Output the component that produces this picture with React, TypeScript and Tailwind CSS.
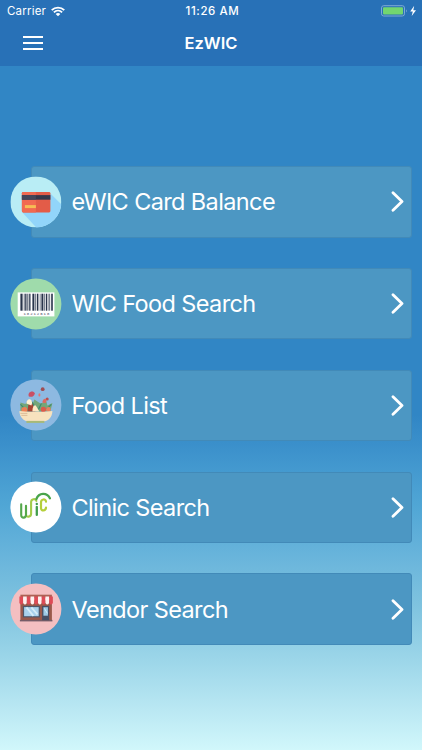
import React from "react";

function CardIcon() {
  return (
    <svg viewBox="-0.4 -0.4 52 52" className="size-full">
      <defs>
        <clipPath id="cardCircle"><circle cx="25.5" cy="25.5" r="25.5" /></clipPath>
      </defs>
      <g clipPath="url(#cardCircle)">
        <rect width="51" height="51" fill="#b9edf5" />
        <path d="M40 17 L60 37 V60 H34 L12 36Z" fill="#92d5fa" />
      </g>
      <rect x="11.5" y="15.5" width="28.5" height="20.5" rx="1.3" fill="#e35c48" />
      <path d="M12.8 15.5H25.5V36H12.8Q11.5 36 11.5 34.7V16.8Q11.5 15.5 12.8 15.5" fill="#f16a51" />
      <rect x="11.5" y="18.7" width="28.5" height="4.6" fill="#35374b" />
      <rect x="11.5" y="18.7" width="14" height="4.6" fill="#45465a" />
      <rect x="14.5" y="28.7" width="11" height="3" fill="#f6bd55" />
    </svg>
  );
}

const bars = [
  [10, 2.2], [13.4, 0.7], [14.8, 1.3], [17, 0.6], [18.3, 1.1], [20.1, 0.5], [22, 2],
  [25, 0.7], [26.5, 1.5], [29.4, 0.6], [31, 2], [34, 0.8], [35.6, 1.2], [37.5, 0.5], [39, 0.7], [40.8, 1.6],
];

function BarcodeIcon() {
  return (
    <svg viewBox="-0.4 -0.4 52 52" className="size-full">
      <circle cx="25.5" cy="25.5" r="25.5" fill="#9fdbab" />
      <rect x="7.3" y="14" width="36.7" height="24" fill="#fff" />
      {bars.map(([x, w]) => (
        <rect key={x} x={x} y="15.3" width={w} height="17" fill="#29354b" />
      ))}
      <text x="13" y="36.5" fontSize="4" textLength="26" fill="#35415a" fontFamily="Liberation Mono, monospace">18212618</text>
    </svg>
  );
}

function FoodIcon() {
  return (
    <svg viewBox="-0.4 -0.4 52 52" className="size-full">
      <circle cx="25.5" cy="25.5" r="25.5" fill="#8db9e1" />
      <path d="M10 32 L10 23 L15 24.5 L18 20 L22 25 L24 20 L30 24 L36 22 L37 26 L42 23.5 L40 32Z" fill="#75a679" />
      <path d="M10 25l5 5M41 25l-5 5M21 22l4 6M31 24l-3 6" stroke="#3d8b70" strokeWidth="1.2" />
      <circle cx="14" cy="30.5" r="3" fill="#ed8056" />
      <circle cx="38" cy="30" r="2.3" fill="#e88060" />
      <circle cx="33" cy="30" r="2.6" fill="#db5b4c" />
      <path d="M17 32l1-7 4-1 3 8Z" fill="#a64332" />
      <path d="M16 24c0-3 2-5 4-4 2 1 2 4 1 6Z" fill="#fff1d4" />
      <path d="M22 32c0-4 2-8 4-5l3 5Z" fill="#ffe9c6" />
      <path d="M9 31.5Q25 33.5 42 31.5C42 38 37 42 33 42H19C13 42 9 37 9 31.5Z" fill="#f7e2be" />
      <path d="M10 34h7M11 36h6" stroke="#d8b894" strokeWidth=".9" />
      <path d="M16 41.5h18v2H16z" fill="#a7b978" />
      <path d="M18.5 17c-2-4 4-7 6-3-1 3-3 4-6 3Z" fill="#c94f65" />
      <circle cx="32.3" cy="9.8" r="1.9" fill="#a14c51" />
      <circle cx="36.8" cy="19.5" r="1.5" fill="#b74e50" />
      <ellipse cx="29" cy="15.5" rx="1" ry="1.6" fill="#e57370" />
      <path d="M32 23c0-4 4-5 4-2s-1 3-4 2Z" fill="#dc6b61" />
    </svg>
  );
}

function WicIcon() {
  return (
    <svg viewBox="-0.4 -0.4 52 52" className="size-full" fill="none" strokeLinecap="round">
      <circle cx="25.5" cy="25.5" r="25.5" fill="#fff" />
      <path d="M15.6 25V32.8C15.6 36.7 20.7 35.7 20.7 32V20.7C20.7 17.5 25.2 16.5 26 19.5" stroke="#a3cc49" strokeWidth="2.1" />
      <path d="M10.8 22.8V33.5C10.8 37.5 15.6 37 15.6 33V24.5" stroke="#55a84b" strokeWidth="2.1" />
      <path d="M26.4 25.5v8" stroke="#419d4c" strokeWidth="2.3" />
      <circle cx="26.4" cy="22.5" r="1.2" fill="#419d4c" />
      <path d="M26 17.6C28.5 11 36.5 11 39.5 16.8" stroke="#49a44b" strokeWidth="2.3" />
      <path d="M35.6 20.2C35.3 17 30.6 17.5 30.6 21V26.5C30.6 30 35.3 29.8 35.6 26.2" stroke="#b5cf3b" strokeWidth="2.2" />
    </svg>
  );
}

function StoreIcon() {
  return (
    <svg viewBox="-0.4 -0.4 52 52" className="size-full">
      <circle cx="25.5" cy="25.5" r="25.5" fill="#f4bfc1" />
      <rect x="10" y="17" width="31.5" height="20.5" fill="#99594b" />
      <rect x="9.5" y="36.5" width="32.5" height="1.5" fill="#765c67" />
      <rect x="12.5" y="22.5" width="17" height="11.5" fill="#4e586b" />
      <rect x="13.7" y="23.7" width="14.6" height="9.1" fill="#a9d2ed" />
      <path d="M16 24l7 8.5M21 24l6 7" stroke="#d5ecf8" strokeWidth="1.7" />
      <rect x="31.7" y="22.5" width="7" height="14.3" fill="#465066" />
      <rect x="33" y="23.8" width="4.5" height="8.5" fill="#9dcbe6" />
      <path d="M34 25l3 5" stroke="#d5ecf8" strokeWidth="1" />
      <rect x="10" y="11.3" width="31.5" height="3" fill="#ad6154" />
      {[0, 1, 2, 3, 4, 5, 6, 7, 8].map((i) => (
        <path
          key={i}
          transform={`translate(${8.9 + i * 3.72} 0)`}
          d="M.1 13.2h3.7v6.300q-1.850 3.400-3.700 0Z"
          fill={i % 2 ? "#fff0ef" : "#dd4b56"}
        />
      ))}
    </svg>
  );
}

const items = [
  { label: "eWIC Card Balance", Icon: CardIcon },
  { label: "WIC Food Search", Icon: BarcodeIcon },
  { label: "Food List", Icon: FoodIcon },
  { label: "Clinic Search", Icon: WicIcon },
  { label: "Vendor Search", Icon: StoreIcon },
];

export default function App() {
  return (
    <div className="flex h-[750px] w-full flex-col overflow-hidden bg-[linear-gradient(180deg,#3186c5_0px,#3186c5_415px,#3b90cb_445px,#50a6d5_505px,#68b4db_555px,#7fc3df_605px,#9cd6e9_660px,#b7e6f2_705px,#d1f7fb_750px)] font-['Inter','Liberation_Sans',sans-serif] text-white">
      <header className="h-[66px] shrink-0 bg-[#2871b7]">
        <div className="grid h-[22px] grid-cols-[1fr_auto_1fr] items-center pl-[7px] pr-[4px]">
          <div className="flex items-center gap-[5px]">
            <span className="text-[11.5px] leading-[22px] tracking-[0.2px]">Carrier</span>
            <svg width="14" height="11" viewBox="0 0 15 11" fill="none" stroke="white" strokeWidth="2">
              <path d="M.8 4.100C4.500.4 10.500.4 14.200 4.100M3.100 6.400C5.600 4 9.400 4 11.900 6.400" />
              <path d="M5 8.200Q7.500 6.200 10 8.200L7.500 10.700Z" fill="white" stroke="none" />
            </svg>
          </div>
          <span className="text-[11.5px] font-medium leading-[22px] tracking-[0.6px]">11:26 AM</span>
          <svg className="justify-self-end" width="38" height="12" viewBox="0 0 38 12">
            <rect x="1.5" y=".7" width="23" height="10.3" rx="2.2" fill="none" stroke="#7eabd4" />
            <rect x="3" y="2.2" width="20" height="7.3" rx="1" fill="#72d66f" />
            <path d="M26 4.200q1.600 1.700 0 3.400Z" fill="#8cb4d9" />
            <path d="M34.200.8L30.200 6.400h2.600L31.700 11 36 5.200h-2.700Z" fill="white" />
          </svg>
        </div>
        <div className="grid h-[42px] grid-cols-[1fr_auto_1fr] items-center">
          <svg width="20" height="14" viewBox="0 0 20 14" className="-mt-px ml-[23px]" stroke="white" strokeWidth="2">
            <path d="M0 1h20M0 7h20M0 13h20" />
          </svg>
          <h1 className="text-[16.5px] font-semibold leading-[42px]">EzWIC</h1>
        </div>
      </header>
      <nav className="flex flex-col gap-[30.4px] pl-[10px] pr-[10.4px] pt-[100.2px]">
        {items.map(({ label, Icon }) => (
          <a key={label} className="flex h-[71.4px] items-center">
            <span className="z-10 -mr-[31px] size-[52px] shrink-0">
              <Icon />
            </span>
            <span className="flex h-full flex-1 items-center justify-between rounded-[3px] border border-[#428ab8] bg-[#4c97c3] pl-[39.5px] pr-[7px]">
              <span className="whitespace-nowrap pt-px text-[23.5px] leading-[30px] tracking-[-0.62px]">{label}</span>
              <svg width="13" height="21" viewBox="0 0 13 21" fill="none" stroke="white" strokeWidth="2.8" strokeLinecap="round" strokeLinejoin="round">
                <path d="M2 1.800L11 10.500L2 19.200" />
              </svg>
            </span>
          </a>
        ))}
      </nav>
    </div>
  );
}
